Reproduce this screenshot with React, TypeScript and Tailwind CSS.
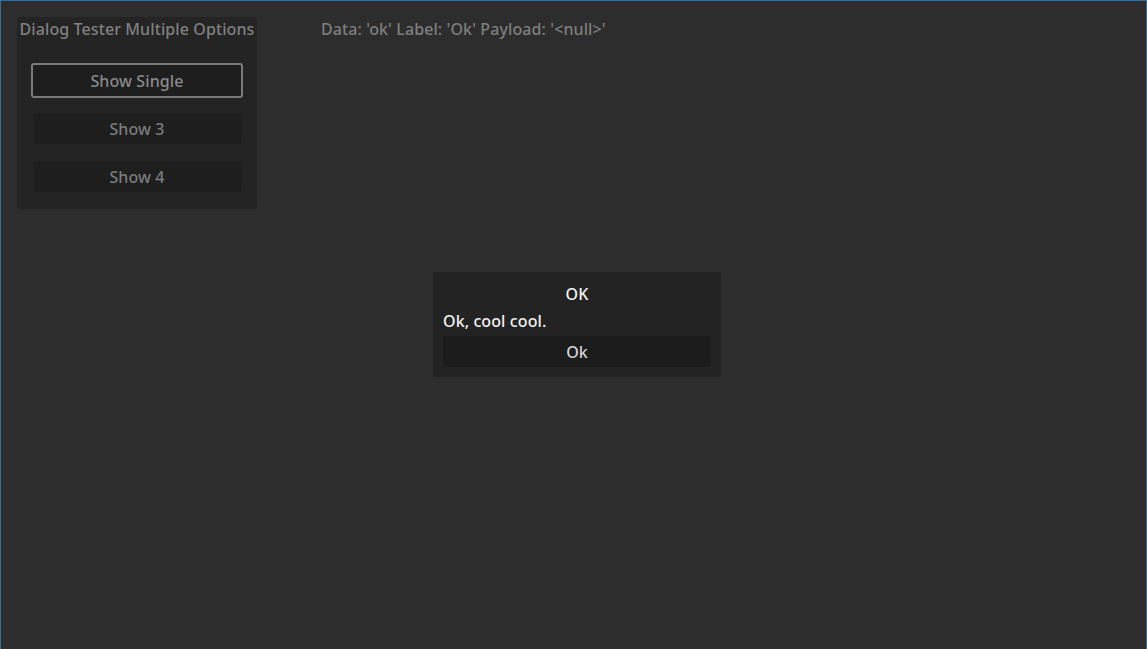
const font = "font-['Noto_Sans','Open_Sans',sans-serif] font-medium tracking-[0.1px]";

function SideButton({ label, focused }: { label: string; focused?: boolean }) {
  return (
    <button
      className={
        focused
          ? 'h-[35px] w-[212px] rounded-[3px] border-2 border-[#7a7a7a] bg-[#1e1e1e] text-[16px] text-[#8a8a8a]'
          : 'mx-[2px] h-[31px] w-[208px] rounded-[2px] bg-[#1e1e1e] text-[16px] text-[#7c7c7c]'
      }
    >
      {label}
    </button>
  );
}

export default function App() {
  return (
    <div
      className={`${font} relative h-[649px] w-[1147px] overflow-hidden border-x border-t border-[#3d6a94] bg-[#2d2d2d]`}
    >
      <div className="flex items-start gap-[64px] pl-[16px] pt-[16px]">
        <div className="flex w-[240px] flex-col items-center rounded-[3px] bg-[#242424] pb-[17px]">
          <p className="whitespace-nowrap text-[16px] leading-[24px] text-[#808080]">Dialog Tester Multiple Options</p>
          <div className="mt-[22px] flex flex-col gap-[15px]">
            <SideButton label="Show Single" focused />
            <div className="flex flex-col gap-[17px]">
              <SideButton label="Show 3" />
              <SideButton label="Show 4" />
            </div>
          </div>
        </div>
        <p className="text-[16px] leading-[24px] text-[#7e7e7e]">
          Data: 'ok' Label: 'Ok' Payload: '&lt;null&gt;'
        </p>
      </div>

      <div className="absolute left-[432px] top-[271px] flex w-[288px] flex-col rounded-[3px] bg-[#232323] px-[10px] pb-[10px] pt-[10px]">
        <p className="text-center text-[16px] leading-[24px] text-[#f2f2f2]">OK</p>
        <p className="mt-[3px] text-[16px] leading-[24px] text-[#f2f2f2]">Ok, cool cool.</p>
        <button className="mt-[3px] h-[31px] w-full rounded-[2px] bg-[#1c1c1c] text-[16px] text-[#d4d4d4]">
          Ok
        </button>
      </div>
    </div>
  );
}
